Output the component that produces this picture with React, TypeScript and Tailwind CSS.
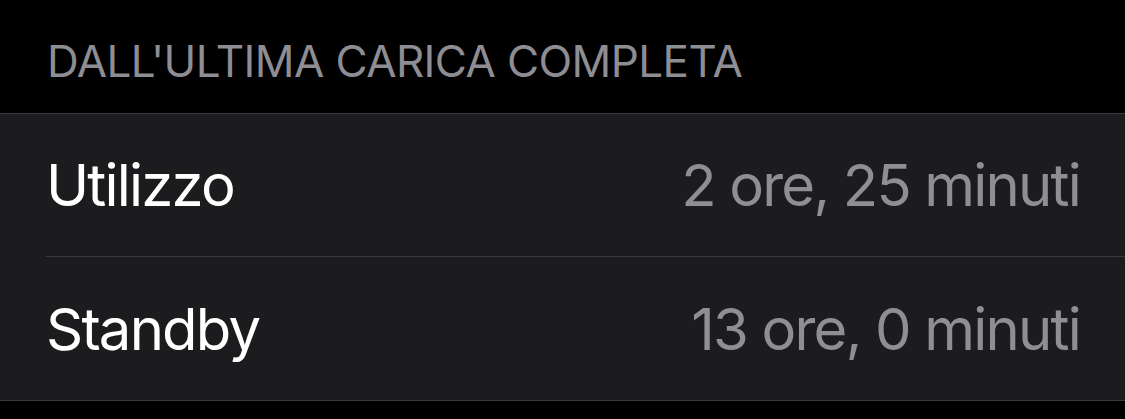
export default function App() {
  const rows = [
    { label: "Utilizzo", value: "2 ore, 25 minuti" },
    { label: "Standby", value: "13 ore, 0 minuti" },
  ];
  return (
    <div className="w-[1125px] h-[419px] bg-black overflow-hidden" style={{ fontFamily: "Inter, 'Noto Sans', sans-serif" }}>
      <div className="h-[113px] flex items-end pl-[47px] pb-[30px]">
        <span className="text-[44px] leading-none text-[#8d8d93] tracking-[-0.6px]">DALL'ULTIMA CARICA COMPLETA</span>
      </div>
      <div className="bg-[#1c1c1e] border-t border-b border-[#3a3a3c]">
        {rows.map((r, i) => (
          <div key={r.label} className="pl-[46px]">
            <div className={`flex items-center justify-between pr-[45px] h-[143px] ${i === 0 ? "border-b border-[#3a3a3c]" : ""}`}>
              <span className="text-[58px] text-white leading-none tracking-[-1.8px]">{r.label}</span>
              <span className="text-[58px] text-[#8e8e93] leading-none tracking-[-1.8px]">{r.value}</span>
            </div>
          </div>
        ))}
      </div>
    </div>
  );
}
